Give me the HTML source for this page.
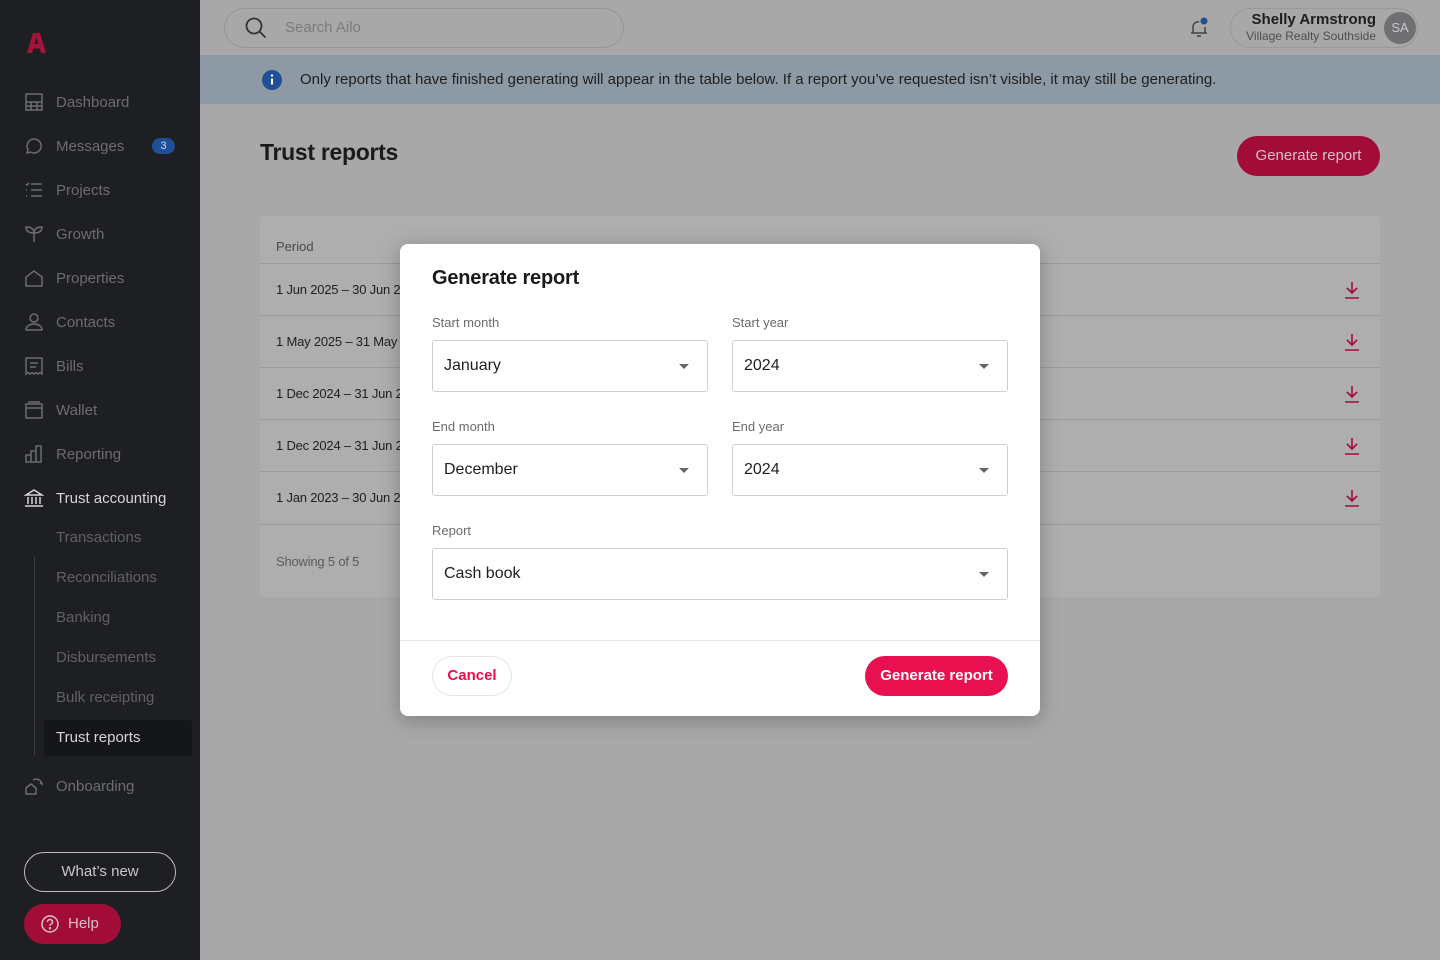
<!DOCTYPE html>
<html><head><meta charset="utf-8"><style>
*{box-sizing:border-box;margin:0;padding:0}
body{width:1440px;height:960px;overflow:hidden;font-family:"Liberation Sans",sans-serif;background:#a8a8a8;position:relative}
.sb{position:absolute;left:0;top:0;width:200px;height:960px;background:#1e1f23}
.nav{position:absolute;left:24px;display:flex;align-items:center;color:#6c6d72;font-size:15px}
.nav svg{width:20px;height:20px;margin-right:12px;fill:none;stroke:#6c6d72;stroke-width:1.5}
.sub{position:absolute;left:56px;color:#606166;font-size:15px}
.main{position:absolute;left:200px;top:0;right:0;height:960px}
.search{position:absolute;left:24px;top:8px;width:400px;height:40px;border:1px solid #959595;border-radius:20px;color:#7a7a7a;font-size:15px;padding-left:60px;line-height:38px}
.banner{position:absolute;left:0;top:55px;width:1240px;height:49px;background:#8e99a6;font-size:15px;color:#1e1e1e;line-height:49px;padding-left:100px}
.card{position:absolute;left:60px;top:216px;width:1120px;height:381px;background:#aeaeae;border-radius:4px}
.row{position:absolute;left:0;width:1120px;height:52px;border-top:1px solid #9c9c9c;font-size:13px;color:#1f1f1f;padding-left:16px;line-height:52px;letter-spacing:-0.2px}
.dl{position:absolute;right:20px;top:17px}
.modal{position:absolute;left:400px;top:244px;width:640px;height:472px;background:#fff;border-radius:8px;box-shadow:0 4px 20px rgba(0,0,0,.25)}
.lbl{position:absolute;font-size:13px;color:#6b6b6b}
.sel{position:absolute;height:52px;border:1px solid #cfcfcf;border-radius:3px;font-size:16px;color:#1f1f1f;line-height:50px;padding-left:11px}
.sel:after{content:"";position:absolute;right:18px;top:23px;border-left:5px solid transparent;border-right:5px solid transparent;border-top:5px solid #666}
</style></head><body>
<div class="sb">
<svg style="position:absolute;left:27px;top:33px" width="19" height="20" viewBox="0 0 19 20"><path d="M6 0h7l6 20h-5l-1.3-4.5H6.3L5 20H0zM7.5 11h4L9.5 4z" fill="#a5123a" fill-rule="evenodd"/></svg>
<div class="nav" style="top:92px"><svg viewBox="0 0 20 20"><rect x="2" y="2" width="16" height="16"/><path d="M2 10h16M2 14h16M7 10v8M13 10v8"/></svg>Dashboard</div>
<div class="nav" style="top:136px"><svg viewBox="0 0 20 20"><path d="M10 3a7 7 0 1 1-3.5 13L3 17l1-3.5A7 7 0 0 1 10 3z"/></svg>Messages<span style="position:absolute;left:128px;background:#1f4f96;color:#cfd8e8;font-size:11px;border-radius:8px;width:23px;height:16px;text-align:center;line-height:16px">3</span></div>
<div class="nav" style="top:180px"><svg viewBox="0 0 20 20"><path d="M7 4h11M7 10h11M7 16h11M2 4l1 1 2-2M2 10h1M2 16h1"/></svg>Projects</div>
<div class="nav" style="top:224px"><svg viewBox="0 0 20 20"><path d="M10 18V9M10 9C10 5 7 3 2 3c0 4 3 6 8 6zM10 9c0-4 3-6 8-6 0 4-3 6-8 6z"/></svg>Growth</div>
<div class="nav" style="top:268px"><svg viewBox="0 0 20 20"><path d="M2 9l8-6 8 6v9H2z"/></svg>Properties</div>
<div class="nav" style="top:312px"><svg viewBox="0 0 20 20"><circle cx="10" cy="6" r="4"/><path d="M2 18c0-4 4-6 8-6s8 2 8 6z"/></svg>Contacts</div>
<div class="nav" style="top:356px"><svg viewBox="0 0 20 20"><path d="M2 2h16v16l-2-1.5-2 1.5-2-1.5-2 1.5-2-1.5-2 1.5-2-1.5-2 1.5zM6 7h8M6 11h6"/></svg>Bills</div>
<div class="nav" style="top:400px"><svg viewBox="0 0 20 20"><rect x="2" y="4" width="16" height="14"/><path d="M2 8h16M4 2h12"/></svg>Wallet</div>
<div class="nav" style="top:444px"><svg viewBox="0 0 20 20"><path d="M2 11h5v7H2zM7 7h5v11H7zM12 2h5v16h-5z"/></svg>Reporting</div>
<div class="nav" style="top:488px;color:#d6d6d8"><svg viewBox="0 0 20 20" style="stroke:#d6d6d8"><path d="M2 7l8-5 8 5zM4 9v7M8 9v7M12 9v7M16 9v7M1 18h18"/></svg>Trust accounting</div>
<div style="position:absolute;left:34px;top:556px;width:1px;height:200px;background:#3a3b40"></div>
<div class="sub" style="top:529px">Transactions</div>
<div class="sub" style="top:569px">Reconciliations</div>
<div class="sub" style="top:609px">Banking</div>
<div class="sub" style="top:649px">Disbursements</div>
<div class="sub" style="top:689px">Bulk receipting</div>
<div style="position:absolute;left:44px;top:720px;width:148px;height:36px;background:#151619;border-radius:3px"></div>
<div class="sub" style="top:729px;color:#d6d6d8">Trust reports</div>
<div class="nav" style="top:776px"><svg viewBox="0 0 20 20"><path d="M2 12l5-4 5 4v6H2zM9 4a6 6 0 0 1 9 4l-2-1"/></svg>Onboarding</div>
<div style="position:absolute;left:24px;top:852px;width:152px;height:40px;border:1px solid #bbb;border-radius:20px;color:#c8c8ca;font-size:15px;text-align:center;line-height:38px">What’s new</div>
<div style="position:absolute;left:24px;top:904px;width:97px;height:40px;background:#a10d37;border-radius:20px;color:#d8c2c8;font-size:15px;line-height:40px;padding-left:44px"><svg style="position:absolute;left:17px;top:11px" width="18" height="18" viewBox="0 0 18 18" fill="none" stroke="#d8c2c8" stroke-width="1.5"><circle cx="9" cy="9" r="8"/><path d="M6.5 7a2.5 2.5 0 1 1 3.3 2.3c-.6.3-.8.7-.8 1.4"/><circle cx="9" cy="13.3" r=".5"/></svg>Help</div>
</div>
<div class="main">
<div class="search"><svg style="position:absolute;left:20px;top:8px" width="22" height="22" viewBox="0 0 22 22" fill="none" stroke="#333" stroke-width="1.8"><circle cx="9" cy="9" r="7.5"/><path d="M14.5 14.5l6 6"/></svg>Search Ailo</div>
<svg style="position:absolute;left:987px;top:16px" width="24" height="24" viewBox="0 0 24 24" fill="none" stroke="#444" stroke-width="1.5"><path d="M6 17V11a5 5 0 0 1 6-5M18 11v6M4 17h16M10 20h4"/><circle cx="17" cy="5" r="3.5" fill="#1f4f96" stroke="none"/></svg>
<div style="position:absolute;left:1030px;top:8px;width:188px;height:40px;border:1px solid #9a9a9a;border-radius:20px"></div>
<div style="position:absolute;right:64px;top:11px;font-size:15px;font-weight:bold;color:#1e1e1e;text-align:right">Shelly Armstrong</div>
<div style="position:absolute;right:64px;top:29px;font-size:12px;color:#4e4e4e">Village Realty Southside</div>
<div style="position:absolute;left:1184px;top:12px;width:32px;height:32px;border-radius:50%;background:#707074;color:#c8c8c8;font-size:13px;text-align:center;line-height:32px">SA</div>
<div class="banner"><svg style="position:absolute;left:62px;top:15px" width="20" height="20" viewBox="0 0 20 20"><circle cx="10" cy="10" r="10" fill="#1f4f96"/><rect x="9" y="8.5" width="2" height="6" fill="#fff"/><circle cx="10" cy="5.5" r="1.2" fill="#fff"/></svg>Only reports that have finished generating will appear in the table below. If a report you’ve requested isn’t visible, it may still be generating.</div>
<div style="position:absolute;left:60px;top:139px;font-size:23px;color:#1a1a1a;font-weight:bold;letter-spacing:-0.3px">Trust reports</div>
<div style="position:absolute;left:1037px;top:136px;width:143px;height:40px;background:#a10d37;border-radius:20px;color:#d8c2c8;font-size:15px;text-align:center;line-height:40px">Generate report</div>
<div class="card">
<div style="position:absolute;left:16px;top:23px;font-size:13px;color:#4a4a4a">Period</div>
<div class="row" style="top:47px">1 Jun 2025 – 30 Jun 2<svg class="dl" width="16" height="18" viewBox="0 0 16 18" fill="none" stroke="#a10d37" stroke-width="1.6"><path d="M8 1v11M3 7l5 5 5-5M1 17h14"/></svg></div>
<div class="row" style="top:99px">1 May 2025 – 31 May<svg class="dl" width="16" height="18" viewBox="0 0 16 18" fill="none" stroke="#a10d37" stroke-width="1.6"><path d="M8 1v11M3 7l5 5 5-5M1 17h14"/></svg></div>
<div class="row" style="top:151px">1 Dec 2024 – 31 Jun 2<svg class="dl" width="16" height="18" viewBox="0 0 16 18" fill="none" stroke="#a10d37" stroke-width="1.6"><path d="M8 1v11M3 7l5 5 5-5M1 17h14"/></svg></div>
<div class="row" style="top:203px">1 Dec 2024 – 31 Jun 2<svg class="dl" width="16" height="18" viewBox="0 0 16 18" fill="none" stroke="#a10d37" stroke-width="1.6"><path d="M8 1v11M3 7l5 5 5-5M1 17h14"/></svg></div>
<div class="row" style="top:255px">1 Jan 2023 – 30 Jun 2<svg class="dl" width="16" height="18" viewBox="0 0 16 18" fill="none" stroke="#a10d37" stroke-width="1.6"><path d="M8 1v11M3 7l5 5 5-5M1 17h14"/></svg></div>
<div class="row" style="top:308px;color:#5a5a5a;line-height:74px;height:73px">Showing 5 of 5</div>
</div>
</div>
<div class="modal">
<div style="position:absolute;left:32px;top:23px;font-size:20px;color:#1a1a1a;font-weight:bold;letter-spacing:-0.2px">Generate report</div>
<div class="lbl" style="left:32px;top:71px">Start month</div>
<div class="lbl" style="left:332px;top:71px">Start year</div>
<div class="sel" style="left:32px;top:96px;width:276px">January</div>
<div class="sel" style="left:332px;top:96px;width:276px">2024</div>
<div class="lbl" style="left:32px;top:175px">End month</div>
<div class="lbl" style="left:332px;top:175px">End year</div>
<div class="sel" style="left:32px;top:200px;width:276px">December</div>
<div class="sel" style="left:332px;top:200px;width:276px">2024</div>
<div class="lbl" style="left:32px;top:279px">Report</div>
<div class="sel" style="left:32px;top:304px;width:576px">Cash book</div>
<div style="position:absolute;left:0;top:396px;width:640px;height:1px;background:#e6e6e6"></div>
<div style="position:absolute;left:32px;top:412px;width:80px;height:40px;border:1px solid #e4e4e4;border-radius:20px;color:#e3104e;font-size:15px;text-align:center;line-height:38px;font-weight:bold">Cancel</div>
<div style="position:absolute;left:465px;top:412px;width:143px;height:40px;background:#e8104f;border-radius:20px;color:#fff;font-size:15px;text-align:center;line-height:40px;font-weight:bold">Generate report</div>
</div>
</body></html>
